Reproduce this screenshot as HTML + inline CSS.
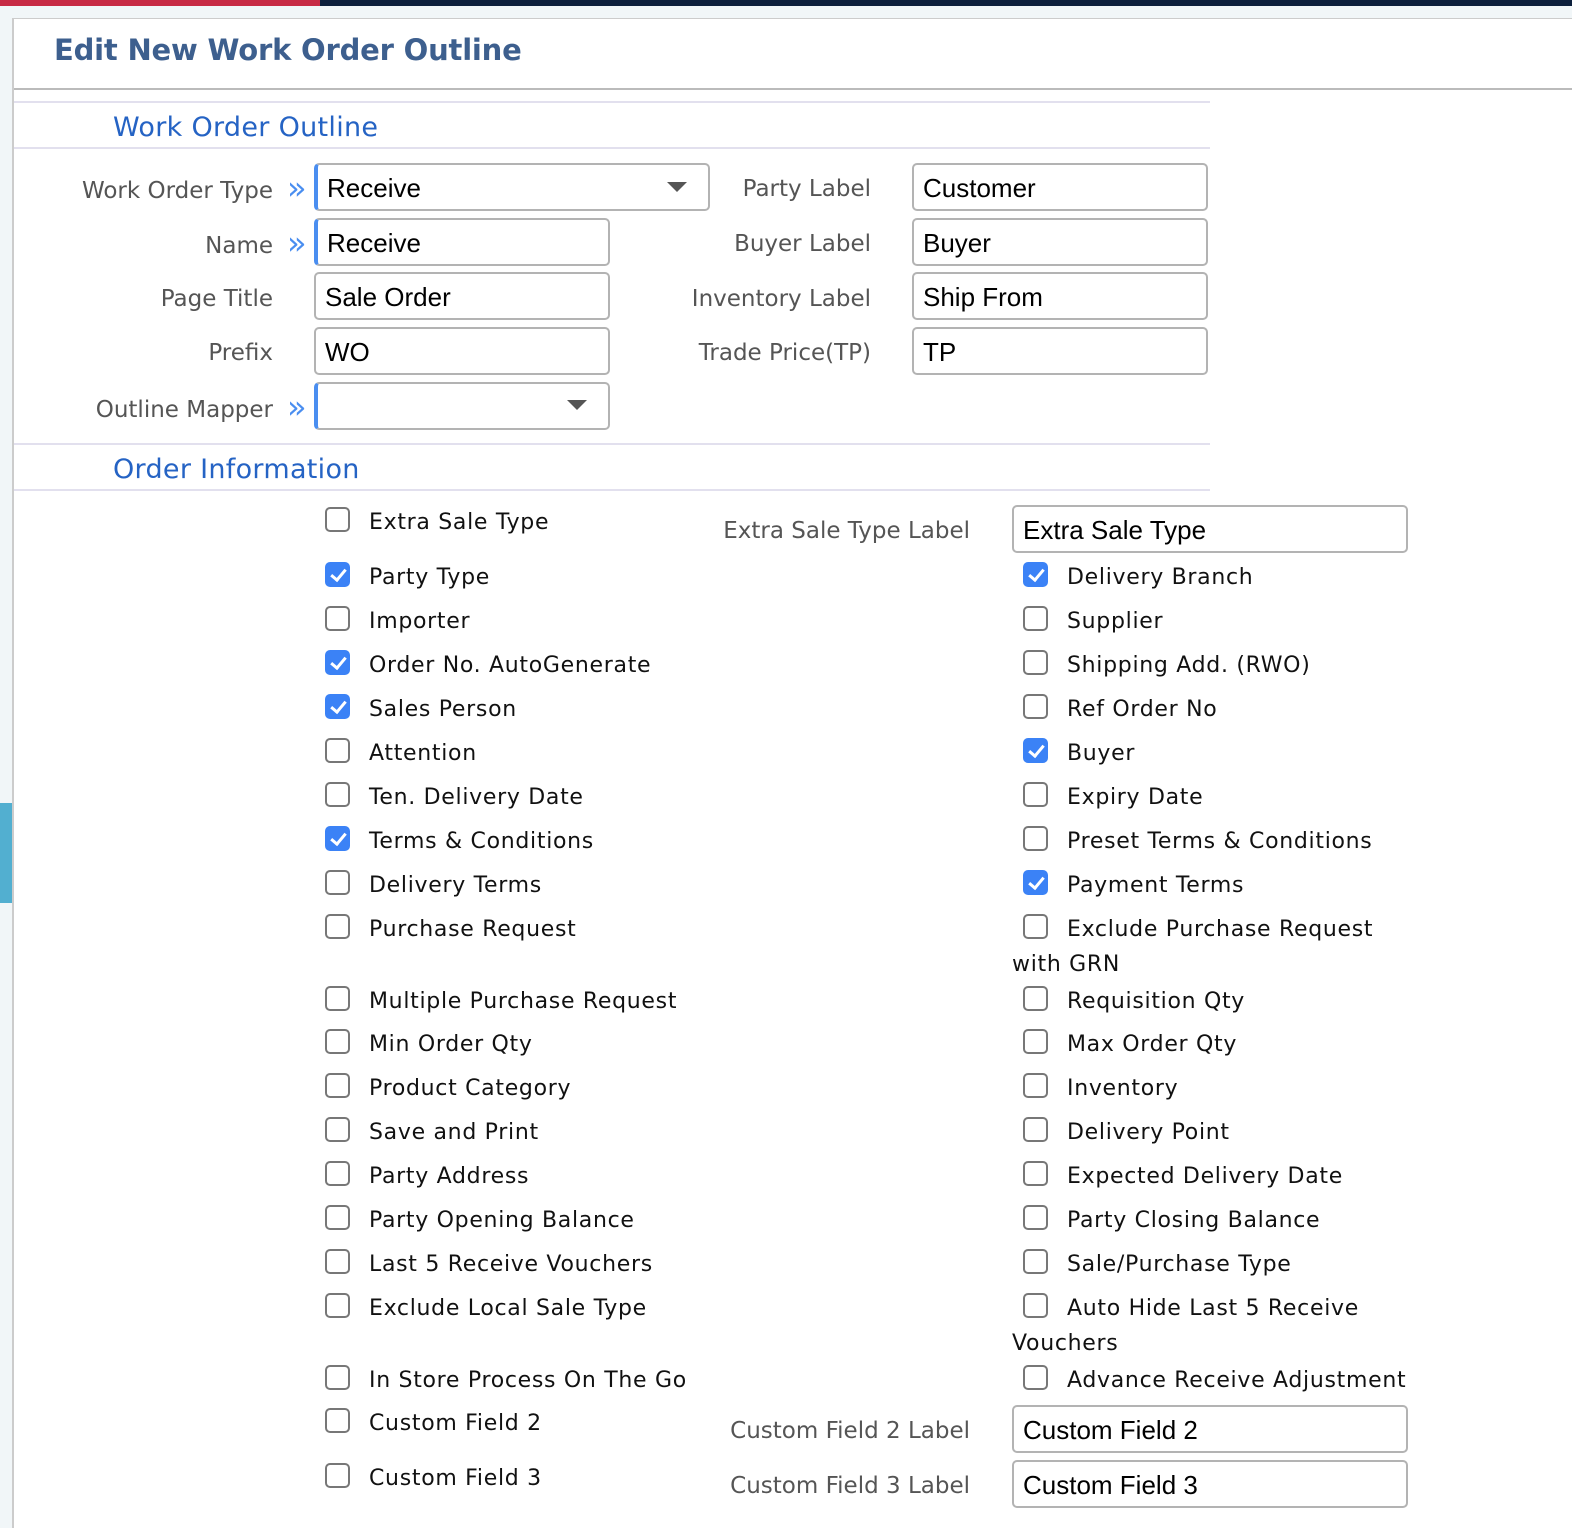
<!DOCTYPE html>
<html><head><meta charset="utf-8"><style>
*{box-sizing:border-box;margin:0;padding:0}
body{width:1572px;height:1518px;position:relative;overflow:hidden;background:#f1f6f8;font-family:"DejaVu Sans","Liberation Sans",sans-serif}
.a{position:absolute}
.panel{left:12px;top:18px;width:1560px;height:1510px;background:#fff;border-left:2px solid #ccc;border-top:1px solid #ccc}
.h{left:54px;top:33px;font-size:29px;font-weight:bold;color:#3d5f8e;white-space:nowrap;letter-spacing:-0.2px}
.line{height:2px;background:#e2e0ee}
.sec{font-size:27px;color:#2563c4;white-space:nowrap;margin-top:3px;letter-spacing:0.3px}
.lab{font-size:23px;color:#555;text-align:right;white-space:nowrap;line-height:28px;margin-top:3px}
.in{height:48px;border:2px solid #b3b3b3;border-radius:5px;background:#fff;font-family:"Liberation Sans",sans-serif;font-size:26px;color:#000;padding-left:9px;line-height:46px;white-space:nowrap}
.bl{border-left:4px solid #4a8ef0}
.arr{font-size:32px;color:#4a8ef0;line-height:28px}
.tri{width:0;height:0;border-left:10px solid transparent;border-right:10px solid transparent;border-top:10px solid #555}
.cb{width:25px;height:25px;border:2px solid #777;border-radius:5px;background:#fff;margin-top:1px;margin-left:1px}
.cb.on{background:#3b82f6;border-color:#3b82f6}
.cb.on::after{content:"";position:absolute;left:7px;top:2px;width:6px;height:12px;border-right:3px solid #fff;border-bottom:3px solid #fff;transform:rotate(40deg)}
.t{font-size:22px;color:#111;white-space:nowrap;line-height:28px;letter-spacing:0.7px;margin-top:4px}
</style></head><body>
<div class="a" style="left:0;top:0;width:320px;height:6px;background:#c72a45"></div>
<div class="a" style="left:320px;top:0;width:1252px;height:6px;background:#0c1f3c"></div>
<div class="a panel"></div>
<div class="a" style="left:0;top:803px;width:12px;height:100px;background:#52afd0"></div>
<div class="a h">Edit New Work Order Outline</div>
<div class="a" style="left:14px;top:88px;width:1558px;height:2px;background:#bbb"></div>
<div class="a line" style="left:14px;top:101px;width:1196px"></div>
<div class="a sec" style="left:113px;top:109px">Work Order Outline</div>
<div class="a line" style="left:14px;top:147px;width:1196px"></div>

<div class="a lab" style="right:1299px;top:174px">Work Order Type</div>
<div class="a arr" style="left:287px;top:174px">»</div>
<div class="a in bl" style="left:314px;top:163px;width:396px">Receive</div>
<div class="a tri" style="left:667px;top:182px"></div>
<div class="a lab" style="right:1299px;top:229px">Name</div>
<div class="a arr" style="left:287px;top:229px">»</div>
<div class="a in bl" style="left:314px;top:218px;width:296px">Receive</div>
<div class="a lab" style="right:1299px;top:282px">Page Title</div>
<div class="a in" style="left:314px;top:272px;width:296px">Sale Order</div>
<div class="a lab" style="right:1299px;top:336px">Prefix</div>
<div class="a in" style="left:314px;top:327px;width:296px">WO</div>
<div class="a lab" style="right:1299px;top:393px">Outline Mapper</div>
<div class="a arr" style="left:287px;top:393px">»</div>
<div class="a in bl" style="left:314px;top:382px;width:296px"></div>
<div class="a tri" style="left:567px;top:400px"></div>

<div class="a lab" style="right:701px;top:172px">Party Label</div>
<div class="a in" style="left:912px;top:163px;width:296px">Customer</div>
<div class="a lab" style="right:701px;top:227px">Buyer Label</div>
<div class="a in" style="left:912px;top:218px;width:296px">Buyer</div>
<div class="a lab" style="right:701px;top:282px">Inventory Label</div>
<div class="a in" style="left:912px;top:272px;width:296px">Ship From</div>
<div class="a lab" style="right:701px;top:336px">Trade Price(TP)</div>
<div class="a in" style="left:912px;top:327px;width:296px">TP</div>

<div class="a line" style="left:14px;top:443px;width:1196px"></div>
<div class="a sec" style="left:113px;top:451px">Order Information</div>
<div class="a line" style="left:14px;top:489px;width:1196px"></div>

<div class="a lab" style="right:602px;top:514px">Extra Sale Type Label</div>
<div class="a in" style="left:1012px;top:505px;width:396px">Extra Sale Type</div>
<div class="a lab" style="right:602px;top:1414px">Custom Field 2 Label</div>
<div class="a in" style="left:1012px;top:1405px;width:396px">Custom Field 2</div>
<div class="a lab" style="right:602px;top:1469px">Custom Field 3 Label</div>
<div class="a in" style="left:1012px;top:1460px;width:396px">Custom Field 3</div>

<div class="a cb" style="left:324px;top:506px"></div><div class="a t" style="left:369px;top:505px">Extra Sale Type</div>
<div class="a cb on" style="left:324px;top:561px"></div><div class="a t" style="left:369px;top:560px">Party Type</div>
<div class="a cb" style="left:324px;top:605px"></div><div class="a t" style="left:369px;top:604px">Importer</div>
<div class="a cb on" style="left:324px;top:649px"></div><div class="a t" style="left:369px;top:648px">Order No. AutoGenerate</div>
<div class="a cb on" style="left:324px;top:693px"></div><div class="a t" style="left:369px;top:692px">Sales Person</div>
<div class="a cb" style="left:324px;top:737px"></div><div class="a t" style="left:369px;top:736px">Attention</div>
<div class="a cb" style="left:324px;top:781px"></div><div class="a t" style="left:369px;top:780px">Ten. Delivery Date</div>
<div class="a cb on" style="left:324px;top:825px"></div><div class="a t" style="left:369px;top:824px">Terms &amp; Conditions</div>
<div class="a cb" style="left:324px;top:869px"></div><div class="a t" style="left:369px;top:868px">Delivery Terms</div>
<div class="a cb" style="left:324px;top:913px"></div><div class="a t" style="left:369px;top:912px">Purchase Request</div>
<div class="a cb" style="left:324px;top:985px"></div><div class="a t" style="left:369px;top:984px">Multiple Purchase Request</div>
<div class="a cb" style="left:324px;top:1028px"></div><div class="a t" style="left:369px;top:1027px">Min Order Qty</div>
<div class="a cb" style="left:324px;top:1072px"></div><div class="a t" style="left:369px;top:1071px">Product Category</div>
<div class="a cb" style="left:324px;top:1116px"></div><div class="a t" style="left:369px;top:1115px">Save and Print</div>
<div class="a cb" style="left:324px;top:1160px"></div><div class="a t" style="left:369px;top:1159px">Party Address</div>
<div class="a cb" style="left:324px;top:1204px"></div><div class="a t" style="left:369px;top:1203px">Party Opening Balance</div>
<div class="a cb" style="left:324px;top:1248px"></div><div class="a t" style="left:369px;top:1247px">Last 5 Receive Vouchers</div>
<div class="a cb" style="left:324px;top:1292px"></div><div class="a t" style="left:369px;top:1291px">Exclude Local Sale Type</div>
<div class="a cb" style="left:324px;top:1364px"></div><div class="a t" style="left:369px;top:1363px">In Store Process On The Go</div>
<div class="a cb" style="left:324px;top:1407px"></div><div class="a t" style="left:369px;top:1406px">Custom Field 2</div>
<div class="a cb" style="left:324px;top:1462px"></div><div class="a t" style="left:369px;top:1461px">Custom Field 3</div>

<div class="a cb on" style="left:1022px;top:561px"></div><div class="a t" style="left:1067px;top:560px">Delivery Branch</div>
<div class="a cb" style="left:1022px;top:605px"></div><div class="a t" style="left:1067px;top:604px">Supplier</div>
<div class="a cb" style="left:1022px;top:649px"></div><div class="a t" style="left:1067px;top:648px">Shipping Add. (RWO)</div>
<div class="a cb" style="left:1022px;top:693px"></div><div class="a t" style="left:1067px;top:692px">Ref Order No</div>
<div class="a cb on" style="left:1022px;top:737px"></div><div class="a t" style="left:1067px;top:736px">Buyer</div>
<div class="a cb" style="left:1022px;top:781px"></div><div class="a t" style="left:1067px;top:780px">Expiry Date</div>
<div class="a cb" style="left:1022px;top:825px"></div><div class="a t" style="left:1067px;top:824px">Preset Terms &amp; Conditions</div>
<div class="a cb on" style="left:1022px;top:869px"></div><div class="a t" style="left:1067px;top:868px">Payment Terms</div>
<div class="a cb" style="left:1022px;top:913px"></div><div class="a t" style="left:1067px;top:912px">Exclude Purchase Request</div>
<div class="a t" style="left:1012px;top:947px">with GRN</div>
<div class="a cb" style="left:1022px;top:985px"></div><div class="a t" style="left:1067px;top:984px">Requisition Qty</div>
<div class="a cb" style="left:1022px;top:1028px"></div><div class="a t" style="left:1067px;top:1027px">Max Order Qty</div>
<div class="a cb" style="left:1022px;top:1072px"></div><div class="a t" style="left:1067px;top:1071px">Inventory</div>
<div class="a cb" style="left:1022px;top:1116px"></div><div class="a t" style="left:1067px;top:1115px">Delivery Point</div>
<div class="a cb" style="left:1022px;top:1160px"></div><div class="a t" style="left:1067px;top:1159px">Expected Delivery Date</div>
<div class="a cb" style="left:1022px;top:1204px"></div><div class="a t" style="left:1067px;top:1203px">Party Closing Balance</div>
<div class="a cb" style="left:1022px;top:1248px"></div><div class="a t" style="left:1067px;top:1247px">Sale/Purchase Type</div>
<div class="a cb" style="left:1022px;top:1292px"></div><div class="a t" style="left:1067px;top:1291px">Auto Hide Last 5 Receive</div>
<div class="a t" style="left:1012px;top:1326px">Vouchers</div>
<div class="a cb" style="left:1022px;top:1364px"></div><div class="a t" style="left:1067px;top:1363px">Advance Receive Adjustment</div>
</body></html>
